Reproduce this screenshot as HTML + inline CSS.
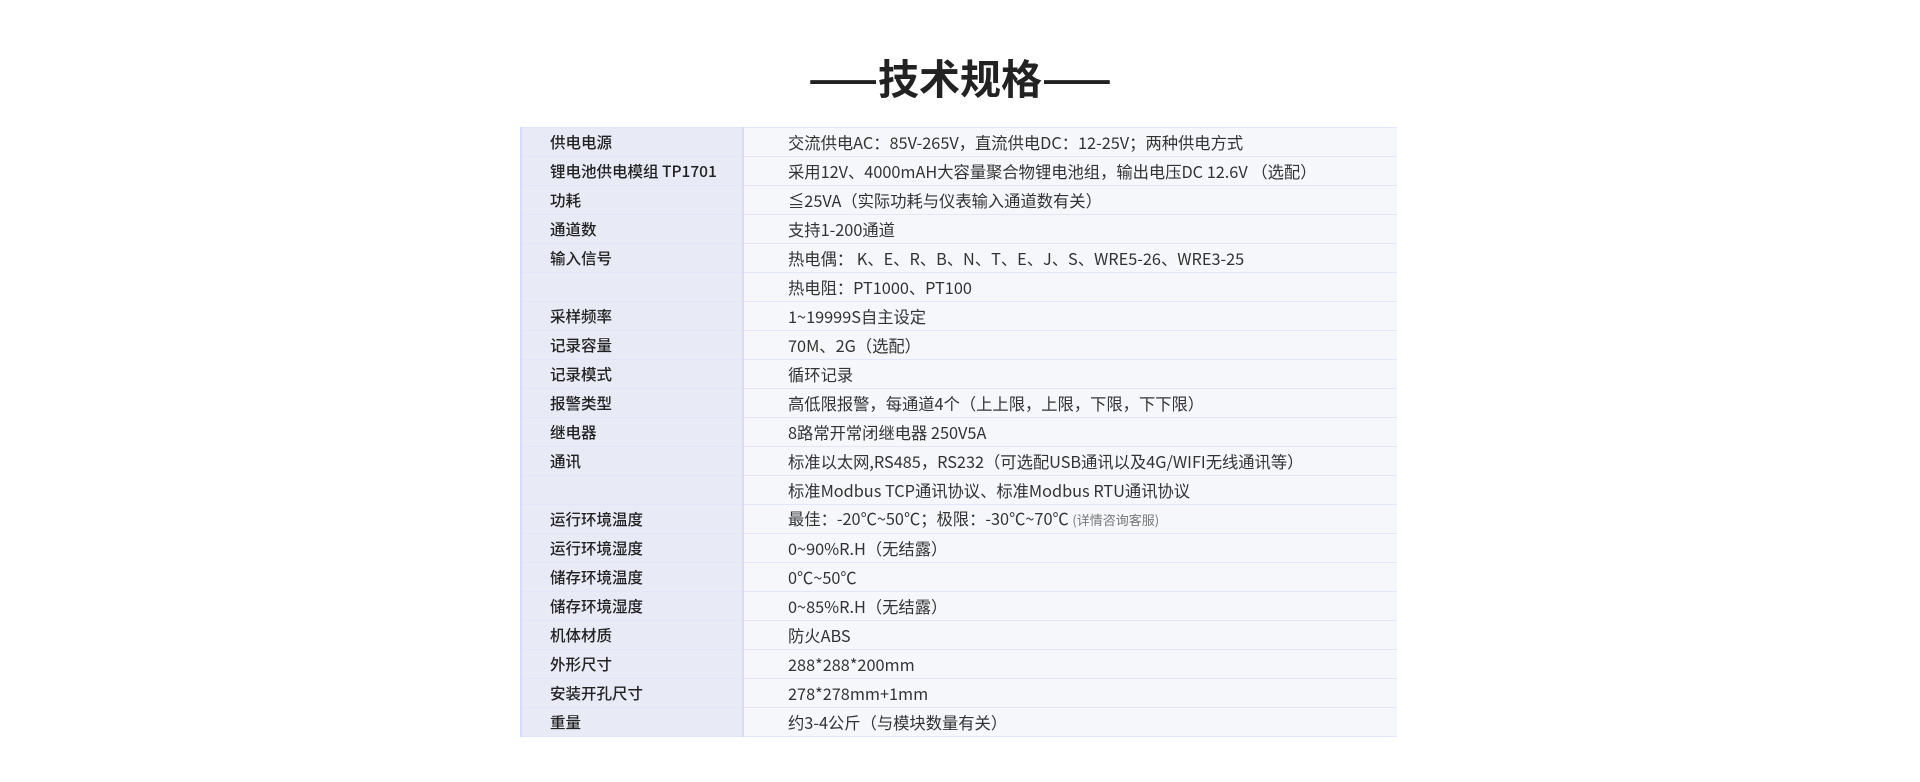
<!DOCTYPE html>
<html><head><meta charset="utf-8"><style>
html,body{margin:0;padding:0;background:#fff;width:1920px;height:782px;overflow:hidden}
body{font-family:"Noto Sans CJK SC",sans-serif;color:#333}
h1{position:absolute;left:0;width:1920px;top:50px;margin:0;text-align:center;font-size:41px;line-height:52px;font-weight:bold;color:#222;font-family:"Noto Sans CJK SC",sans-serif}
table{position:absolute;left:520px;top:127px;width:877px;border-collapse:collapse;table-layout:fixed}
col.a{width:222px}
td{height:29px;box-sizing:border-box;border:1px solid #e2e6fa;border-width:1px 0;font-size:15.5px;line-height:27px;padding:0;white-space:nowrap;overflow:visible;font-family:"Noto Sans CJK SC",sans-serif}
td.l{background:#e8ebf6;padding-left:28px;border-left:2px solid #d4dcfa;border-right:2px solid #d4dcfa;color:#222;font-weight:500}
td.v{background:#f6f7fb;padding-left:44px;color:#333;font-size:16.3px}
small{font-size:13px;color:#777}
</style></head><body>
<h1>——技术规格——</h1>
<table>
<colgroup><col class="a"><col></colgroup>
<tr><td class="l">供电电源</td><td class="v">交流供电AC：85V-265V，直流供电DC：12-25V；两种供电方式</td></tr>
<tr><td class="l">锂电池供电模组 TP1701</td><td class="v">采用12V、4000mAH大容量聚合物锂电池组，输出电压DC 12.6V （选配）</td></tr>
<tr><td class="l">功耗</td><td class="v">≦25VA（实际功耗与仪表输入通道数有关）</td></tr>
<tr><td class="l">通道数</td><td class="v">支持1-200通道</td></tr>
<tr><td class="l">输入信号</td><td class="v">热电偶： K、E、R、B、N、T、E、J、S、WRE5-26、WRE3-25</td></tr>
<tr><td class="l"></td><td class="v">热电阻：PT1000、PT100</td></tr>
<tr><td class="l">采样频率</td><td class="v">1~19999S自主设定</td></tr>
<tr><td class="l">记录容量</td><td class="v">70M、2G（选配）</td></tr>
<tr><td class="l">记录模式</td><td class="v">循环记录</td></tr>
<tr><td class="l">报警类型</td><td class="v">高低限报警，每通道4个（上上限，上限，下限，下下限）</td></tr>
<tr><td class="l">继电器</td><td class="v">8路常开常闭继电器 250V5A</td></tr>
<tr><td class="l">通讯</td><td class="v">标准以太网,RS485，RS232（可选配USB通讯以及4G/WIFI无线通讯等）</td></tr>
<tr><td class="l"></td><td class="v">标准Modbus TCP通讯协议、标准Modbus RTU通讯协议</td></tr>
<tr><td class="l">运行环境温度</td><td class="v">最佳：-20℃~50℃；极限：-30℃~70℃ <small>(详情咨询客服)</small></td></tr>
<tr><td class="l">运行环境湿度</td><td class="v">0~90%R.H（无结露）</td></tr>
<tr><td class="l">储存环境温度</td><td class="v">0℃~50℃</td></tr>
<tr><td class="l">储存环境湿度</td><td class="v">0~85%R.H（无结露）</td></tr>
<tr><td class="l">机体材质</td><td class="v">防火ABS</td></tr>
<tr><td class="l">外形尺寸</td><td class="v">288*288*200mm</td></tr>
<tr><td class="l">安装开孔尺寸</td><td class="v">278*278mm+1mm</td></tr>
<tr><td class="l">重量</td><td class="v">约3-4公斤（与模块数量有关）</td></tr>
</table>
</body></html>
